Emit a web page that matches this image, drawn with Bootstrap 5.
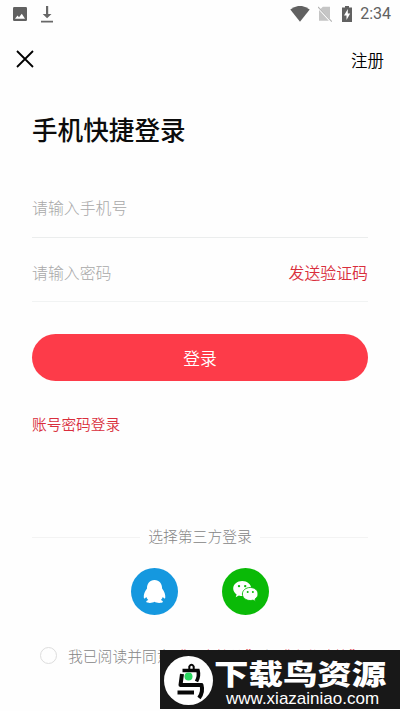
<!DOCTYPE html>
<html lang="zh-CN">
<head>
    <meta charset="UTF-8">
    <meta name="viewport" content="width=device-width, initial-scale=1.0">
    <title>手机快捷登录</title>
    <!-- Bootstrap CSS -->
    <link href="https://cdn.jsdelivr.net/npm/bootstrap@5.3.0/dist/css/bootstrap.min.css" rel="stylesheet">
    <style>
        body {
            background-color: #fefefe;
            color: #111;
            font-family: Roboto, "Noto Sans CJK SC", sans-serif;
            font-size: 16px;
            line-height: 24px;
        }
        .screen {
            position: relative;
            width: 400px;
            height: 711px;
            overflow: hidden;
        }
        .status-bar {
            height: 28px;
            padding: 0 9px 0 13px;
            color: #616161;
        }
        .icon-download {
            margin-left: 14px;
        }
        .icon-battery {
            margin-left: 10px;
        }
        .clock {
            font-size: 16px;
            margin-left: 8px;
        }
        .top-bar {
            height: 62px;
            padding: 0 16px;
        }
        .register {
            font-family: "Noto Sans CJK SC", sans-serif;
            font-size: 16.5px;
            font-weight: 350;
            padding-top: 1px;
            color: #000;
        }
        .login-form {
            padding: 22px 32px 0;
        }
        .login-title {
            font-size: 25.6px;
            line-height: 38px;
            font-weight: 500;
            margin-bottom: 23px;
            color: #0c0c0c;
        }
        .field-row {
            height: 65px;
            padding-top: 7px;
            border-bottom: 1px solid #ebeded;
        }
        .field-row + .field-row {
            height: 64px;
            border-bottom-color: #f1f3f3;
        }
        .field-row .form-control,
        .field-row .form-control:focus {
            color: #333;
            background: transparent;
            box-shadow: none;
            font-size: 15.9px;
            font-weight: 300;
            height: 30px;
        }
        .field-row .form-control::placeholder {
            color: #a8a8a8;
            opacity: 1;
        }
        .red-link {
            color: #d92e3c;
            font-family: "Noto Sans CJK SC", sans-serif;
            font-size: 15.9px;
            font-weight: 350;
            text-decoration: none;
            white-space: nowrap;
        }
        .account-link {
            font-size: 14.7px;
            margin-top: 31px;
        }
        .btn-login,
        .btn-login:hover {
            height: 47px;
            margin-top: 32px;
            background: #fd3b49;
            color: #fff;
            font-family: "Noto Sans CJK SC", sans-serif;
            font-size: 16.8px;
            font-weight: 350;
            line-height: 24px;
            border: 0;
        }
        .divider-row {
            margin-top: 89px;
            color: #858585;
            font-size: 14.8px;
            font-weight: 300;
        }
        .divider-line {
            height: 1px;
            background: #f3f3f3;
        }
        .social-row {
            margin-top: 19px;
            gap: 44px;
        }
        .social-btn {
            width: 47px;
            height: 47px;
        }
        .agree-row {
            margin-top: 27px;
            padding-left: 8px;
            gap: 11px;
            color: #858585;
            font-family: "Noto Sans CJK SC", sans-serif;
            font-size: 14.8px;
            font-weight: 300;
            white-space: nowrap;
        }
        .agree-circle {
            width: 17px;
            height: 17px;
            border: 1px solid #ddd;
        }
        .agree-text {
            padding-top: 2px;
        }
        .agree-row .red-link {
            font-size: 14.8px;
            font-weight: 300;
        }
        /* site banner lying over the bottom of the page */
        .watermark {
            position: absolute;
            left: 160px;
            top: 650px;
            width: 240px;
            height: 59px;
            padding-left: 4px;
            background: #181818;
            color: #fff;
        }
        .brand-name {
            font-family: "Noto Sans CJK SC", sans-serif;
            font-size: 28px;
            line-height: 28px;
            font-weight: 900;
            margin-top: 9px;
            transform: scaleX(1.23);
            transform-origin: 0 0;
            white-space: nowrap;
            width: 140px;
        }
        .brand-site {
            font-family: "Liberation Sans", sans-serif;
            font-size: 17px;
            line-height: 18px;
            margin-top: 3px;
            padding-left: 12px;
        }
    </style>
</head>
<body>
    <div class="screen">
        <div class="status-bar d-flex align-items-center">
            <svg width="14" height="14" viewBox="0 0 14 14">
                <rect width="14" height="14" rx="1.2" fill="#616161"/>
                <path d="M2 11.7 4.5 8.5 6 10.2 8.8 6.7 12 11.7Z" fill="#fff"/>
            </svg>
            <svg class="icon-download" width="12" height="17" viewBox="0 0 12 17">
                <path d="M5 0H7.2V8H10.5L6.1 12.2 1.7 8H5ZM0 14.8H12V16.5H0Z" fill="#686868"/>
            </svg>
            <svg class="ms-auto" width="20" height="16" viewBox="0 0 20 16">
                <path d="M.3 3.5Q10-3.8 19.7 3.5L10 15.7Z" fill="#616161"/>
            </svg>
            <svg class="ms-2" width="14" height="16" viewBox="0 0 14 16">
                <path d="M4.8.7H12V12.8L2.6 3ZM1 4 10.8 14.7H1Z" fill="#c5c5c5"/>
                <path d="M0 1 13.8 15.6" stroke="#b5b5b5" stroke-width="1.1"/>
            </svg>
            <svg class="icon-battery" width="10" height="16" viewBox="0 0 10 16">
                <path d="M3 0H7V1.5H10V16H0V1.5H3Z" fill="#616161"/>
                <path d="M5.8 3 2 9.5H4.5V14L8.2 7.5H5.8Z" fill="#fff"/>
            </svg>
            <span class="clock">2:34</span>
        </div>

        <div class="top-bar d-flex align-items-center justify-content-between">
            <svg width="18" height="18" viewBox="0 0 18 18">
                <path d="M1 1 17 17M17 1 1 17" stroke="#000" stroke-width="1.8"/>
            </svg>
            <a class="register text-decoration-none" href="#">注册</a>
        </div>

        <main class="login-form">
            <h1 class="login-title">手机快捷登录</h1>
            <form>
                <div class="field-row d-flex align-items-center">
                    <input type="text" class="form-control border-0 p-0" placeholder="请输入手机号">
                </div>
                <div class="field-row d-flex align-items-center">
                    <input type="text" class="form-control border-0 p-0" placeholder="请输入密码">
                    <a class="red-link" href="#">发送验证码</a>
                </div>
                <button type="button" class="btn btn-login rounded-pill w-100">登录</button>
            </form>
            <a class="red-link account-link d-block" href="#">账号密码登录</a>

            <div class="divider-row d-flex align-items-center">
                <span class="divider-line flex-fill"></span>
                <span class="px-2">选择第三方登录</span>
                <span class="divider-line flex-fill"></span>
            </div>
            <div class="social-row d-flex justify-content-center">
                <svg class="social-btn" viewBox="0 0 47 47">
                    <circle cx="23.5" cy="23.5" r="23.5" fill="#1598df"/>
                    <path d="M23.5 12C18.6 12 15.9 15.8 16 20.5 13.7 23.5 12.5 26.5 12.8 29.6 13 31.4 14.3 30.4 15.3 29 15.7 30.3 16.5 31.3 17.3 32 15.5 32.7 15 33.2 15.4 34 16.2 35.3 21.8 35.2 23.5 33.8 25.2 35.2 30.8 35.3 31.8 34 32.2 33.2 31.5 32.6 29.9 32 30.9 31 31.5 30.1 31.8 29 32.8 30.4 34.1 31.3 34.3 29.6 34.5 26.5 33.4 23.5 31.1 20.5 31.2 15.8 28.4 12 23.5 12Z" fill="#fff"/>
                </svg>
                <svg class="social-btn" viewBox="0 0 47 47">
                    <circle cx="23.5" cy="23.5" r="23.5" fill="#0aba07"/>
                    <path d="M20.2 13C15.2 13 11.2 16.3 11.2 20.5 11.2 22.9 12.5 25 14.6 26.4L13.7 29.2 16.9 27.5Q18.5 28 20.2 28C25.2 28 29.2 24.7 29.2 20.5 29.2 16.3 25.2 13 20.2 13Z" fill="#fff"/>
                    <path d="M28.2 19.5C23.8 19.5 20.4 22.4 20.4 26 20.4 29.7 23.9 32.5 28.2 32.5Q29.7 32.5 31 32.1L33.8 33.5 33 31.1C34.9 29.9 36 28.1 36 26 36 22.4 32.6 19.5 28.2 19.5Z" fill="#fff" stroke="#0aba07" stroke-width=".9"/>
                    <g fill="#0aba07">
                        <circle cx="17" cy="18.1" r="1.2"/>
                        <circle cx="23.2" cy="18.1" r="1.2"/>
                        <circle cx="25.7" cy="24" r="1"/>
                        <circle cx="30.9" cy="24" r="1"/>
                    </g>
                </svg>
            </div>
            <div class="agree-row d-flex align-items-center">
                <span class="agree-circle rounded-circle"></span>
                <span class="agree-text">我已阅读并同意<a class="red-link" href="#">“用户协议”</a>和<a class="red-link" href="#">“隐私政策”</a></span>
            </div>
        </main>

        <div class="watermark d-flex">
            <svg width="50" height="59" viewBox="0 0 50 59">
                <circle cx="24.5" cy="30.5" r="24.5" fill="#fff"/>
                <g fill="none" stroke="#080808" stroke-width="4">
                    <path d="M25.3 19V16.5Q27.5 12.8 29.7 16.5V19" stroke-width="2"/>
                    <path d="M18.5 20.5H34Q35.5 26 32.5 31.5" stroke-width="3.6"/>
                    <path d="M18 24 16.5 35H37.5Q39.5 42 35 48" stroke-linejoin="round"/>
                    <path d="M13.5 42.5H30"/>
                </g>
                <circle cx="24.5" cy="26.5" r="4" fill="#2bd760"/>
            </svg>
            <div>
                <div class="brand-name">下载鸟资源</div>
                <div class="brand-site">www.xiazainiao.com</div>
            </div>
        </div>
    </div>
</body>
</html>
